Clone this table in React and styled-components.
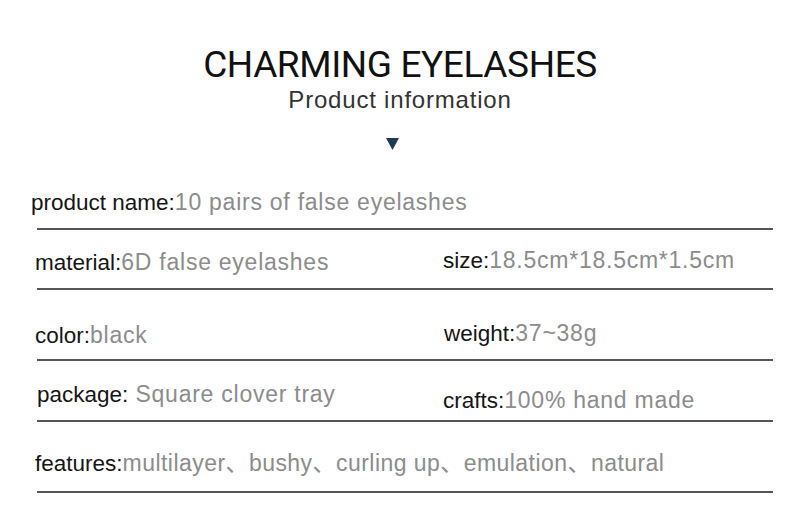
import React from 'react';
import styled, { createGlobalStyle } from 'styled-components';

const GlobalStyle = createGlobalStyle`
  html, body {
    margin: 0;
    padding: 0;
    background: #ffffff;
  }
  body {
    font-family: "Liberation Sans", Arial, "Noto Sans CJK SC", sans-serif;
  }
`;

const Page = styled.div`
  width: 800px;
  height: 517px;
  overflow: hidden;
  background: #ffffff;
  display: flex;
  flex-direction: column;
`;

const Header = styled.header`
  display: flex;
  flex-direction: column;
  align-items: center;
  padding-top: 46px;
`;

const Title = styled.h1`
  margin: 0;
  font-family: Roboto, "Liberation Sans", sans-serif;
  font-weight: 400;
  font-size: 37px;
  line-height: 37px;
  letter-spacing: -0.4px;
  color: #111111;
`;

const Subtitle = styled.h2`
  margin: 5px 0 0;
  font-weight: 400;
  font-size: 24px;
  line-height: 24px;
  letter-spacing: 0.8px;
  color: #333333;
`;

const Arrow = styled.svg`
  display: block;
  margin: 26px 15px 0 0;
`;

const Table = styled.div`
  margin: 0 27px 0 37px;
  display: flex;
  flex-direction: column;
`;

const Row = styled.div`
  height: ${(p) => p.$height}px;
  box-sizing: border-box;
  border-bottom: 2px solid #555555;
  display: grid;
  grid-template-columns: ${(p) => (p.$wide ? '1fr' : '406px 1fr')};
  align-items: end;
`;

const Cell = styled.div`
  margin-left: ${(p) => p.$shift ?? -2}px;
  padding-bottom: ${(p) => p.$pad ?? 12}px;
  white-space: nowrap;
  line-height: 22px;
`;

const Label = styled.span`
  font-size: 22.5px;
  color: #151515;
`;

const Value = styled.span`
  font-size: 23px;
  letter-spacing: ${(p) => p.$spacing ?? 0.75}px;
  color: #8c8c8c;
`;

const Field = ({ label, value, shift, pad, spacing }) => (
  <Cell $shift={shift} $pad={pad}>
    <Label>{label}:</Label>
    <Value $spacing={spacing}>{value}</Value>
  </Cell>
);

const App = () => {
  return (
    <Page>
      <GlobalStyle />
      <Header>
        <Title>CHARMING EYELASHES</Title>
        <Subtitle>Product information</Subtitle>
        <Arrow width="13" height="12" viewBox="0 0 13 12">
          <polygon points="0,0 13,0 6.5,12" fill="#1f3a56" />
        </Arrow>
      </Header>
      <Table>
        <Row $height={80} $wide>
          <Field label="product name" value="10 pairs of false eyelashes" shift={-6} pad={12} />
        </Row>
        <Row $height={60}>
          <Field label="material" value="6D false eyelashes" pad={12} />
          <Field label="size" value="18.5cm*18.5cm*1.5cm" shift={0} pad={14} />
        </Row>
        <Row $height={71}>
          <Field label="color" value="black" pad={10} />
          <Field label="weight" value="37~38g" shift={1} pad={12} />
        </Row>
        <Row $height={61}>
          <Field label="package" value=" Square clover tray" shift={0} pad={12} />
          <Field label="crafts" value="100% hand made" shift={0} pad={6} />
        </Row>
        <Row $height={71} $wide>
          <Field
            label="features"
            value="multilayer、bushy、curling up、emulation、natural"
            pad={14}
            spacing={0.45}
          />
        </Row>
      </Table>
    </Page>
  );
};

export default App;
